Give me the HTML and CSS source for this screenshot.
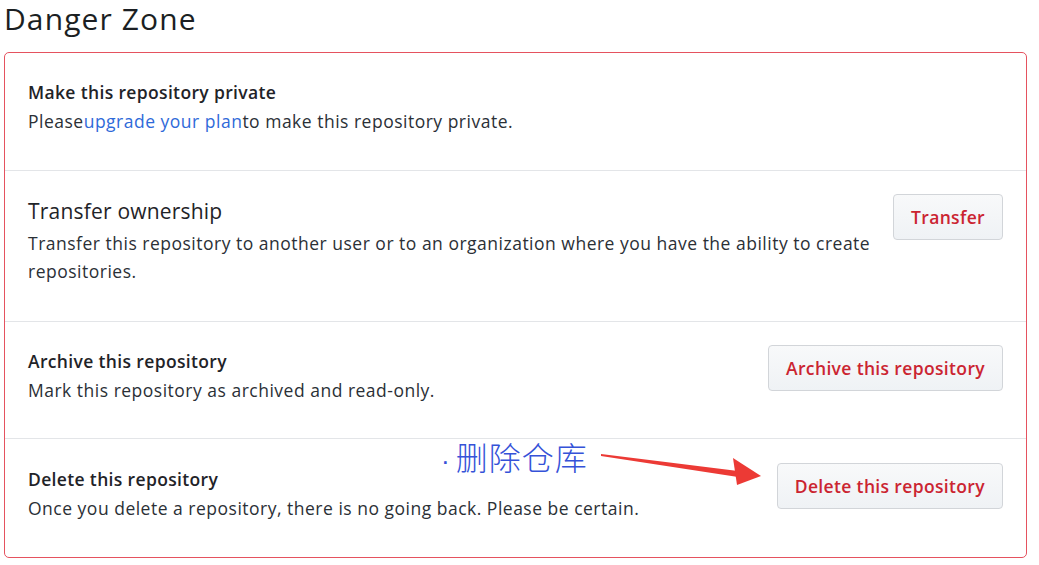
FILE: index.html
```html
<!DOCTYPE html>
<html>
<head>
<meta charset="utf-8">
<link rel="stylesheet" href="styles.css">
</head>
<body>
<div class="page">
  <h2 class="heading">Danger Zone</h2>
  <div class="danger-box">
    <div class="row">
      <div class="info">
        <div class="title">Make this repository private</div>
        <div class="desc">Please<a class="link" href="#">upgrade your plan</a>to make this repository private.</div>
      </div>
    </div>
    <div class="row row-transfer">
      <div class="info">
        <div class="title title-lg">Transfer ownership</div>
        <div class="desc">Transfer this repository to another user or to an organization where you have the ability to create repositories.</div>
      </div>
      <button class="btn">Transfer</button>
    </div>
    <div class="row">
      <div class="info">
        <div class="title">Archive this repository</div>
        <div class="desc">Mark this repository as archived and read-only.</div>
      </div>
      <button class="btn">Archive this repository</button>
    </div>
    <div class="row row-delete">
      <div class="info">
        <div class="title">Delete this repository</div>
        <div class="desc">Once you delete a repository, there is no going back. Please be certain.</div>
      </div>
      <button class="btn">Delete this repository</button>
    </div>
  </div>
  <div class="note"><span class="dot">·</span>删除仓库</div>
  <svg class="arrow" width="170" height="40" viewBox="0 0 170 40">
    <path d="M0 3 L137 20 L137 26 L0 5 Z" fill="#ec3a35"/>
    <path d="M132 7 L160 25 L136 34 Z" fill="#ec3a35"/>
  </svg>
</div>
</body>
</html>
```
FILE: styles.css
```css
html, body {
  margin: 0;
  padding: 0;
  background: #ffffff;
}
body {
  font-family: "Open Sans", "Noto Sans", Arial, sans-serif;
  color: #24292e;
}
.page {
  position: relative;
  width: 1039px;
  height: 565px;
  padding: 0 12px 0 4px;
  box-sizing: border-box;
}
.heading {
  margin: 0;
  padding: 0;
  height: 52px;
  font-size: 30px;
  font-weight: 400;
  line-height: 38px;
  color: #1b1f23;
  letter-spacing: 1.1px;
}
.danger-box {
  border: 1px solid #e5525f;
  border-radius: 5px;
  height: 506px;
  box-sizing: border-box;
  display: flex;
  flex-direction: column;
}
.row {
  display: flex;
  align-items: flex-start;
  justify-content: space-between;
  padding: 24px 23px 0 23px;
  border-top: 1px solid #e3e5e8;
  box-sizing: border-box;
}
.row:first-child {
  border-top: none;
  height: 117px;
}
.row-transfer { height: 151px; padding-top: 25px; }
.row:nth-child(3) { height: 117px; }
.row-delete { flex: 1; padding-top: 25px; }
.info {
  max-width: 852px;
  flex: 0 1 auto;
}
.title {
  font-size: 17.5px;
  font-weight: 600;
  line-height: 30px;
  color: #1f2328;
  letter-spacing: 0.35px;
}
.title-lg {
  font-size: 21px;
  font-weight: 500;
  line-height: 30px;
  margin-bottom: 3px;
  letter-spacing: 0.2px;
}
.desc {
  font-size: 17.5px;
  line-height: 28px;
  color: #2b3036;
  letter-spacing: 0.5px;
}
.link {
  color: #2f6ad9;
  text-decoration: none;
}
.btn {
  flex: none;
  height: 46px;
  padding: 0 17px;
  margin-top: -1px;
  border: 1px solid #d2d5d9;
  border-radius: 4px;
  background: linear-gradient(#f8f9fa, #eff2f5);
  color: #cb2431;
  font-family: "Open Sans", "Noto Sans", Arial, sans-serif;
  font-size: 17.5px;
  font-weight: 600;
  letter-spacing: 0.35px;
}
.row-transfer .btn {
  margin-top: -2px;
}
.note {
  position: absolute;
  left: 441px;
  top: 434px;
  font-family: "Noto Sans CJK SC", sans-serif;
  font-size: 32px;
  font-weight: 300;
  line-height: 44px;
  color: #3552d8;
  letter-spacing: 1px;
}
.dot {
  font-family: "Liberation Sans", sans-serif;
  font-size: 26px;
  margin-right: 6px;
  letter-spacing: 0;
}
.arrow {
  position: absolute;
  left: 601px;
  top: 451px;
}
```
